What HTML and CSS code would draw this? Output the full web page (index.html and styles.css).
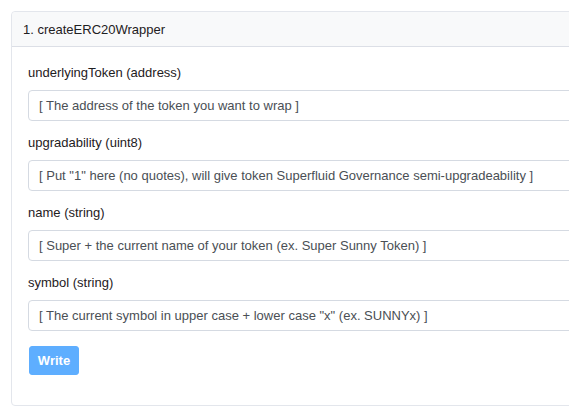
FILE: index.html
```html
<!DOCTYPE html>
<html>
<head>
<meta charset="utf-8">
<link rel="stylesheet" href="styles.css">
</head>
<body>
<div class="card">
  <div class="card-header">1. createERC20Wrapper</div>
  <div class="card-body">
    <div class="form-group">
      <label class="label">underlyingToken (address)</label>
      <input class="input" type="text" placeholder="[ The address of the token you want to wrap ]">
    </div>
    <div class="form-group">
      <label class="label">upgradability (uint8)</label>
      <input class="input" type="text" placeholder="[ Put &quot;1&quot; here (no quotes), will give token Superfluid Governance semi-upgradeability ]">
    </div>
    <div class="form-group">
      <label class="label">name (string)</label>
      <input class="input" type="text" placeholder="[ Super + the current name of your token (ex. Super Sunny Token) ]">
    </div>
    <div class="form-group">
      <label class="label">symbol (string)</label>
      <input class="input" type="text" placeholder="[ The current symbol in upper case + lower case &quot;x&quot; (ex. SUNNYx) ]">
    </div>
    <button class="btn" type="button">Write</button>
  </div>
</div>
</body>
</html>
```
FILE: styles.css
```css
html, body {
  margin: 0;
  padding: 0;
  overflow: hidden;
  background: #ffffff;
}
body {
  font-family: "Liberation Sans", Arial, sans-serif;
  font-size: 13px;
  color: #1e2022;
  padding: 11px 0 0 11px;
}
.card {
  width: 620px;
  border: 1px solid #e3e6ec;
  border-radius: 4px;
  background: #fff;
}
.card-header {
  background: #f8f9fa;
  border-bottom: 1px solid #dcdfe6;
  padding: 0 11px;
  height: 34px;
  line-height: 35px;
  border-radius: 4px 4px 0 0;
}
.card-body {
  padding: 16px 16px 30px 16px;
  display: flex;
  flex-direction: column;
  align-items: flex-start;
}
.form-group {
  display: flex;
  flex-direction: column;
  width: 100%;
  margin-bottom: 12px;
}
.form-group:last-of-type {
  margin-bottom: 15px;
}
.label {
  display: block;
  line-height: 20px;
  margin-bottom: 7px;
  color: #1e2022;
}
.input {
  box-sizing: border-box;
  height: 31px;
  width: 100%;
  border: 1px solid #d5dae2;
  border-radius: 4px;
  padding: 0 10px;
  font-family: "Liberation Sans", Arial, sans-serif;
  font-size: 13px;
  color: #4a4f55;
  background: #fff;
  outline: none;
}
.input::placeholder {
  color: #4a4f55;
  opacity: 1;
}
.btn {
  box-sizing: border-box;
  width: 50px;
  height: 29px;
  background: #5eaeff;
  border: 1px solid #5eaeff;
  border-radius: 3px;
  color: #fff;
  font-family: "Liberation Sans", Arial, sans-serif;
  font-size: 13px;
  font-weight: bold;
  padding: 0;
  margin-left: 1px;
}
```
